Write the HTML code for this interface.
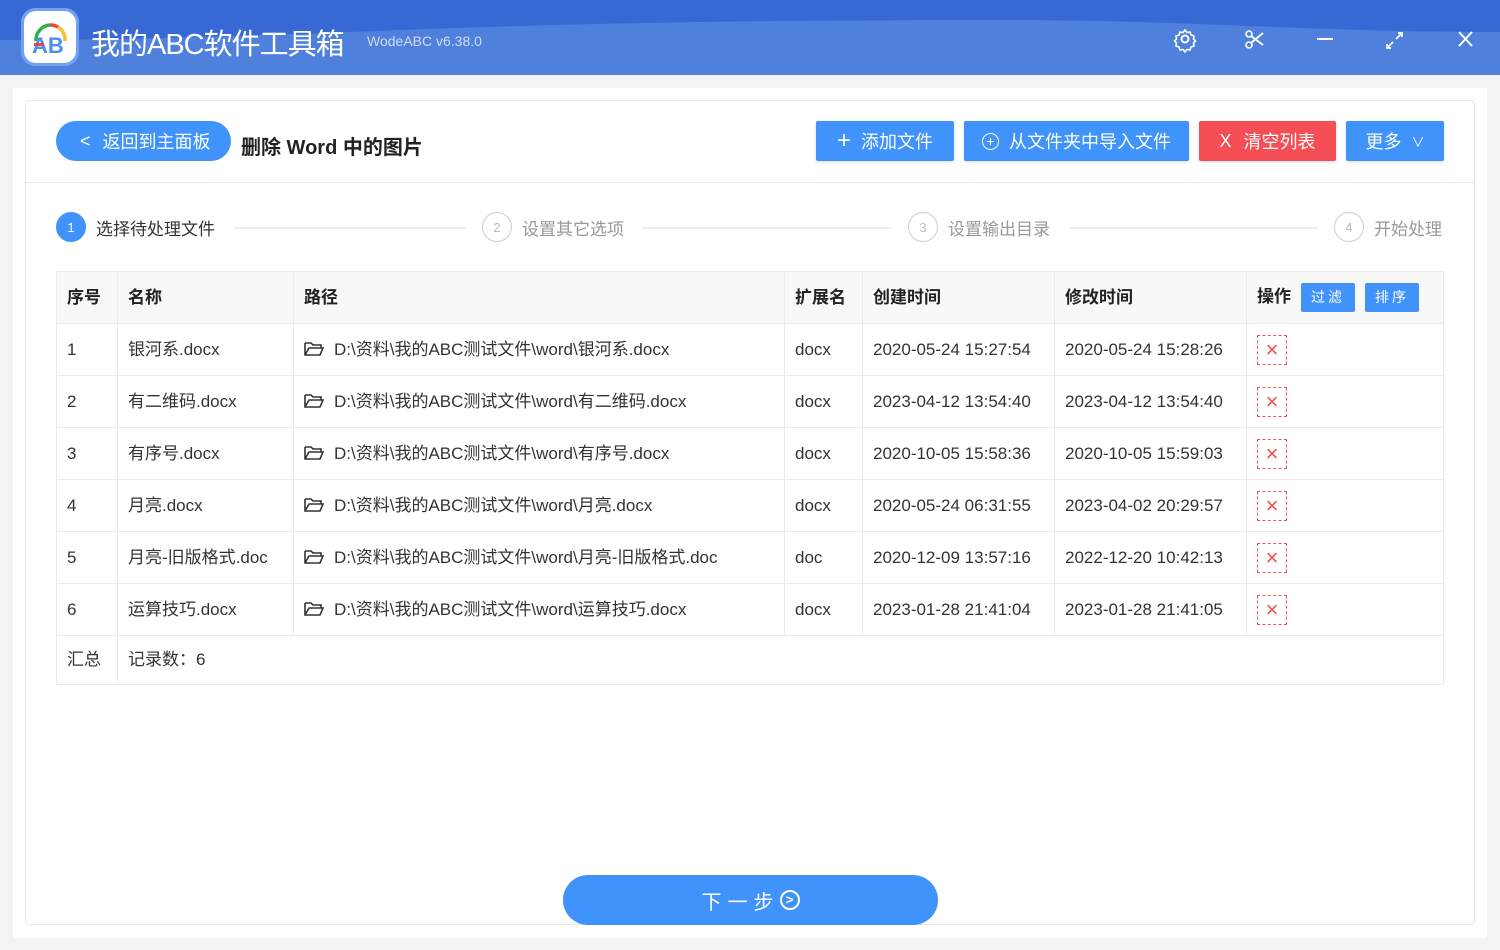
<!DOCTYPE html>
<html><head><meta charset="utf-8"><style>
*{margin:0;padding:0;box-sizing:border-box}
body{width:1500px;height:950px;background:#f3f3f3;font-family:"Liberation Sans","Noto Sans CJK SC",sans-serif;position:relative;overflow:hidden;color:#333}
.hdr{position:absolute;left:0;top:0;width:1500px;height:75px;background:#4f80dc;overflow:hidden}
.abs{position:absolute}
.outer{position:absolute;left:13px;top:88px;width:1474px;height:850px;background:#fff}
.card{position:absolute;left:25px;top:100px;width:1450px;height:825px;background:#fff;border:1px solid #e6e6e6;border-radius:4px}
.btn{position:absolute;height:40px;top:121px;background:#3f93fb;color:#fff;font-size:18px;display:flex;align-items:center;justify-content:center;border-radius:2px;box-shadow:0 1px 3px rgba(0,0,0,.15)}
.step{position:absolute;top:212px;font-size:17px;color:#999;display:flex;align-items:center}
.circ{width:30px;height:30px;border-radius:50%;border:1px solid #ccc;font-size:13px;display:flex;align-items:center;justify-content:center;margin-right:10px;color:#bbb}
.line{position:absolute;top:227px;height:2px;background:#eee}
table{position:absolute;left:56px;top:271px;width:1388px;border-collapse:collapse;font-size:17px}
td{border:1px solid #ebebeb;height:52px;padding-left:10px;color:#333;white-space:nowrap;vertical-align:middle;line-height:20px}
tr.h td{background:#f8f8f8;font-weight:bold;color:#222}
tr.s td{height:49px}
.x{display:inline-block;width:30px;height:30px;border:1px dashed #f05050;color:#f05050;text-align:center;line-height:28px;font-size:22px;vertical-align:middle}
.sb{display:inline-block;background:#3f93fb;color:#fff;font-size:14px;font-weight:normal;width:54px;text-align:center;height:29px;line-height:29px;border-radius:2px;margin-left:10px;letter-spacing:3px;vertical-align:middle}
.fd{display:inline-block;vertical-align:-2px;margin-right:10px}
</style></head><body>
<div class="hdr">
<svg class="abs" style="left:0;top:0" width="1500" height="75"><path d="M0 0H1500V32C1300 32 1200 20 1000 20 800 20 600 22 400 30 200 38 100 40 0 40Z" fill="#3768d3"/></svg>
<div class="abs" style="left:21px;top:8px;width:58px;height:58px;border-radius:14px;background:#6ea3f3"></div>
<div class="abs" style="left:24px;top:11px;width:52px;height:52px;border-radius:12px;background:#fff"></div>
<svg class="abs" style="left:24px;top:11px" width="52" height="52"><path d="M12 30 A15 15 0 0 1 26 14" stroke="#2bb04a" stroke-width="3.5" fill="none"/><path d="M26 14 A15 15 0 0 1 34 16" stroke="#e24b3b" stroke-width="3.5" fill="none"/><path d="M34 16 A15 15 0 0 1 41 30" stroke="#f5c02e" stroke-width="3.5" fill="none"/><text x="8" y="42" font-family="Liberation Sans" font-size="22" font-weight="bold" fill="#4a8ef5">AB</text><rect x="10" y="32" width="10" height="3" fill="#e24b3b"/></svg>
<div class="abs" style="left:91px;top:21px;color:#fff;font-size:29px;letter-spacing:-1px">我的ABC软件工具箱</div>
<div class="abs" style="left:367px;top:33px;color:#cfdcf5;font-size:14px">WodeABC v6.38.0</div>
<svg class="abs" style="left:1170px;top:25px" width="310" height="30" fill="none" stroke="#fff" stroke-width="2">
<circle cx="15" cy="14" r="3.5"/><path d="M15 5l2 2.5 3-.5 1 3 3 1-.5 3 2 2-2 2 .5 3-3 1-1 3-3-.5-2 2.5-2-2.5-3 .5-1-3-3-1 .5-3-2-2 2-2-.5-3 3-1 1-3 3 .5z" stroke-width="1.6"/>
<circle cx="79" cy="9" r="3" stroke-width="1.6"/><circle cx="79" cy="20" r="3" stroke-width="1.6"/><path d="M81 11L93 20M81 18L93 8" stroke-width="1.8"/>
<path d="M147 14H163"/>
<path d="M217 23l6-6M226 14l6-6M228 8h4v4M217 19v4h4" stroke-width="1.8"/>
<path d="M289 7l13 14M302 7l-13 14"/></svg>
</div>
<div class="outer"></div>
<div class="card"></div>
<div class="abs" style="left:26px;top:182px;width:1448px;height:1px;background:#e8e8e8"></div>
<div class="abs" style="left:56px;top:121px;width:175px;height:40px;border-radius:20px;background:#3f93fb;color:#fff;font-size:18px;display:flex;align-items:center;padding-left:24px"><span style="font-size:18px;margin-right:12px">&lt;</span>返回到主面板</div>
<div class="abs" style="left:241px;top:131px;font-size:20px;font-weight:bold;color:#222">删除 Word 中的图片</div>
<div class="btn" style="left:816px;width:138px"><span style="font-size:24px;margin-right:10px;font-weight:300">+</span>添加文件</div>
<div class="btn" style="left:964px;width:225px"><span style="display:inline-block;width:17px;height:17px;border:1.5px solid #fff;border-radius:50%;font-size:14px;line-height:14px;text-align:center;margin-right:10px">+</span>从文件夹中导入文件</div>
<div class="btn" style="left:1199px;width:137px;background:#f54e55"><span style="margin-right:12px">X</span>清空列表</div>
<div class="btn" style="left:1346px;width:98px">更多<span style="font-size:13px;margin-left:10px">∨</span></div>
<div class="step" style="left:56px;color:#333"><div class="circ" style="background:#3f93fb;border-color:#3f93fb;color:#fff">1</div>选择待处理文件</div>
<div class="line" style="left:234px;width:232px"></div>
<div class="step" style="left:482px"><div class="circ">2</div>设置其它选项</div>
<div class="line" style="left:643px;width:249px"></div>
<div class="step" style="left:908px"><div class="circ">3</div>设置输出目录</div>
<div class="line" style="left:1069px;width:249px"></div>
<div class="step" style="left:1334px"><div class="circ">4</div>开始处理</div>
<table>
<colgroup><col style="width:61px"><col style="width:176px"><col style="width:491px"><col style="width:78px"><col style="width:192px"><col style="width:192px"><col></colgroup>
<tr class="h"><td>序号</td><td>名称</td><td>路径</td><td>扩展名</td><td>创建时间</td><td>修改时间</td><td>操作<span class="sb">过滤</span><span class="sb">排序</span></td></tr>
<tr><td>1</td><td>银河系.docx</td><td><svg class="fd" width="20" height="16" fill="none" stroke="#333" stroke-width="1.6"><path d="M1 2h6l2 2h8v3M1 2v12h15l3-7H5L1 14"/></svg>D:\资料\我的ABC测试文件\word\银河系.docx</td><td>docx</td><td>2020-05-24 15:27:54</td><td>2020-05-24 15:28:26</td><td><span class="x">×</span></td></tr>
<tr><td>2</td><td>有二维码.docx</td><td><svg class="fd" width="20" height="16" fill="none" stroke="#333" stroke-width="1.6"><path d="M1 2h6l2 2h8v3M1 2v12h15l3-7H5L1 14"/></svg>D:\资料\我的ABC测试文件\word\有二维码.docx</td><td>docx</td><td>2023-04-12 13:54:40</td><td>2023-04-12 13:54:40</td><td><span class="x">×</span></td></tr>
<tr><td>3</td><td>有序号.docx</td><td><svg class="fd" width="20" height="16" fill="none" stroke="#333" stroke-width="1.6"><path d="M1 2h6l2 2h8v3M1 2v12h15l3-7H5L1 14"/></svg>D:\资料\我的ABC测试文件\word\有序号.docx</td><td>docx</td><td>2020-10-05 15:58:36</td><td>2020-10-05 15:59:03</td><td><span class="x">×</span></td></tr>
<tr><td>4</td><td>月亮.docx</td><td><svg class="fd" width="20" height="16" fill="none" stroke="#333" stroke-width="1.6"><path d="M1 2h6l2 2h8v3M1 2v12h15l3-7H5L1 14"/></svg>D:\资料\我的ABC测试文件\word\月亮.docx</td><td>docx</td><td>2020-05-24 06:31:55</td><td>2023-04-02 20:29:57</td><td><span class="x">×</span></td></tr>
<tr><td>5</td><td>月亮-旧版格式.doc</td><td><svg class="fd" width="20" height="16" fill="none" stroke="#333" stroke-width="1.6"><path d="M1 2h6l2 2h8v3M1 2v12h15l3-7H5L1 14"/></svg>D:\资料\我的ABC测试文件\word\月亮-旧版格式.doc</td><td>doc</td><td>2020-12-09 13:57:16</td><td>2022-12-20 10:42:13</td><td><span class="x">×</span></td></tr>
<tr><td>6</td><td>运算技巧.docx</td><td><svg class="fd" width="20" height="16" fill="none" stroke="#333" stroke-width="1.6"><path d="M1 2h6l2 2h8v3M1 2v12h15l3-7H5L1 14"/></svg>D:\资料\我的ABC测试文件\word\运算技巧.docx</td><td>docx</td><td>2023-01-28 21:41:04</td><td>2023-01-28 21:41:05</td><td><span class="x">×</span></td></tr>
<tr class="s"><td>汇总</td><td colspan="6" style="border-left:1px solid #ebebeb">记录数：6</td></tr>
</table>
<div class="abs" style="left:563px;top:875px;width:375px;height:50px;border-radius:25px;background:#3f93fb;color:#fff;font-size:20px;display:flex;align-items:center;justify-content:center;letter-spacing:6px">下一步<span style="display:inline-block;width:20px;height:20px;border:2px solid #fff;border-radius:50%;font-size:13px;line-height:16px;text-align:center;letter-spacing:0;font-weight:bold">&gt;</span></div>
</body></html>
